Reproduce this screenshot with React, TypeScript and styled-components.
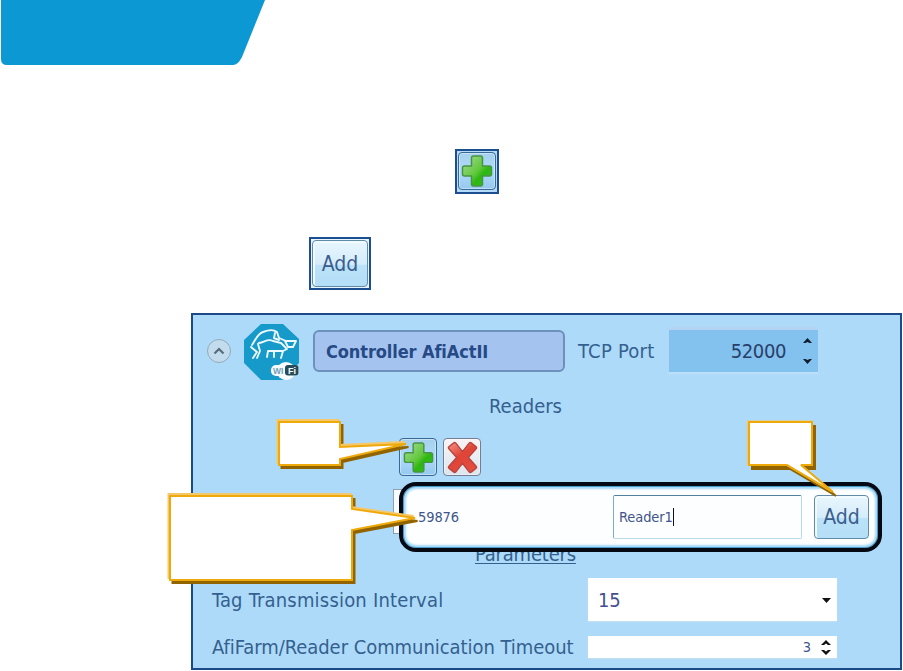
import React, { useState } from 'react'
import styled, { createGlobalStyle } from 'styled-components'


const GlobalStyle = createGlobalStyle`
    body {
        margin: 0;
        background: #fff;
        overflow: hidden;
    }
    * {
        box-sizing: border-box;
    }
`

const Page = styled.div`
    position: relative;
    width: 903px;
    height: 671px;
    overflow: hidden;
    font-family: 'DejaVu Sans Condensed', 'DejaVu Sans', sans-serif;
    font-stretch: condensed;
    color: #34608f;
`

const Banner = styled.svg`
    display: block;
    width: 280px;
    height: 66px;
`

const AddReaderFrame = styled.div`
    width: 44px;
    height: 45px;
    margin: 83px 0 0 455px;
    padding: 1px;
    border: 2px solid #1d4e8f;
    background: #b4dcf8;
`

const AddFrame = styled.div`
    width: 62px;
    height: 53px;
    margin: 43px 0 0 309px;
    padding: 1px;
    border: 2px solid #1d4e8f;
    background: #e9f5fc;
`

const Panel = styled.div`
    width: 711px;
    height: 357px;
    margin: 23px 0 0 191px;
    border: 2px solid #1c4a88;
    background: #aedaf9;
`

const HeaderRow = styled.div`
    display: flex;
    align-items: center;
    height: 72px;
    padding-left: 14px;
`

const CollapseButton = styled.button`
    display: flex;
    align-items: center;
    justify-content: center;
    width: 24px;
    height: 24px;
    padding: 0;
    border: 1.5px solid #93a9b8;
    border-radius: 50%;
    background: #c2dcee;
`

const Logo = styled.svg`
    width: 58px;
    height: 58px;
    margin: 1px 0 0 12px;
`

const NameField = styled.div`
    width: 252px;
    height: 42px;
    margin-left: 12px;
    padding-left: 11px;
    border: 2px solid #6c91bb;
    border-radius: 6px;
    background: #a5c3ef;
    color: #254a86;
    font-size: 18px;
    font-weight: bold;
    line-height: 39px;
    letter-spacing: -0.1px;
    white-space: nowrap;
`

const Text = styled.span<{ $spacing?: number }>`
    font-size: 20px;
    line-height: 24px;
    letter-spacing: ${({ $spacing }) => $spacing || 0}px;
    white-space: nowrap;
`

const PortLabel = styled(Text)`
    width: 91px;
    margin-left: 13px;
`

const PortField = styled.div`
    display: flex;
    align-items: center;
    justify-content: flex-end;
    gap: 16px;
    width: 149px;
    height: 42px;
    padding-right: 5px;
    background: #83c1ee;
    box-shadow: 0 -3px 2px #b5d2f3, 0 2px 1px #bce0f9;
    color: #293f69;
`

const Spinner = styled.svg`
    display: block;
    flex: none;
`

const ReadersTitle = styled.div`
    height: 51px;
    padding: 7px 0 0 296px;
`

const ButtonRow = styled.div`
    display: flex;
    gap: 6px;
    height: 44px;
    padding-left: 206px;
`

const IconButton = styled.button<{ $danger?: boolean }>`
    display: flex;
    align-items: center;
    justify-content: center;
    width: 38px;
    height: 38px;
    padding: 0;
    border: 1.5px solid ${({ $danger }) => $danger ? '#777c94' : '#376995'};
    border-radius: 4px;
    background: ${({ $danger }) => $danger
        ? 'linear-gradient(#f9f4f4, #dce5ed)'
        : 'linear-gradient(#a5d1ee, #afdafa 50%, #95c9ef)'};
    box-shadow: inset 0 0 0 1px rgba(255, 255, 255, 0.4);
`

const ReaderSection = styled.div`
    position: relative;
    height: 96px;
    padding-left: 206px;
`

// Left edge of the grid row, visible beside the highlighted frame
const GridRowEdge = styled.div`
    position: absolute;
    left: 200px;
    top: 7px;
    width: 12px;
    height: 45px;
    border: 1px solid #8f9fae;
    background: #f8fbfd;
`

const ReaderRow = styled.div`
    position: relative;
    z-index: 1;
    display: flex;
    align-items: center;
    width: 483px;
    height: 70px;
    padding-left: 15px;
    border: 4px solid #040914;
    border-radius: 17px;
    background: #fdfeff;
    box-shadow: inset 0 0 0 1px #4c9bcb, inset 0 0 2px 3px #a4daf7;
`

const SmallText = styled.span`
    color: #40558c;
    font-size: 14.5px;
    letter-spacing: -0.1px;
    white-space: nowrap;
`

const ReaderId = styled(SmallText)`
    width: 195px;
`

const ReaderInput = styled.div`
    display: flex;
    align-items: center;
    width: 189px;
    height: 44px;
    padding-left: 5px;
    border: 1px solid #b9dae8;
    border-top-color: #53809e;
    border-left-color: #7cacc7;
    border-radius: 2px;
`

const Caret = styled.span`
    width: 1px;
    height: 18px;
    background: #111;
`

const AddButton = styled.button<{ $width: number, $height: number }>`
    width: ${({ $width }) => $width}px;
    height: ${({ $height }) => $height}px;
    padding: 0;
    border: 1.5px solid #608ba9;
    border-radius: 4px;
    background: linear-gradient(#e9f6fd, #d4ecfa 52%, #bbe2f8 53%, #b4def7);
    box-shadow: inset 1px 1px 0 1px #f1faff;
    color: #3b5e8f;
    font-family: inherit;
    font-stretch: condensed;
    font-size: 21px;
    line-height: 24px;
`

const RowAddButton = styled(AddButton)`
    margin-left: 12px;
`

const ParametersTitle = styled.div`
    margin: -10px 0 0 76px;
    text-decoration: underline;
    text-decoration-thickness: 1px;
    text-underline-offset: 2px;
`

const Settings = styled.div`
    display: flex;
    flex-direction: column;
    gap: 15px;
`

const SettingRow = styled.div<{ $height: number }>`
    display: flex;
    align-items: center;
    height: ${({ $height }) => $height}px;
    padding-left: 19px;
`

const SettingLabel = styled(Text)`
    width: 376px;
`

const SettingField = styled.div`
    display: flex;
    align-items: center;
    justify-content: space-between;
    width: 249px;
    height: 100%;
    padding: 0 6px 0 10px;
    background: #fff;
    box-shadow: 0 1px 1px #c1def0;
    color: #454f8f;
`

const NumberField = styled(SettingField)`
    justify-content: flex-end;
    gap: 10px;
`

const CalloutLayer = styled.svg`
    position: absolute;
    left: 0;
    top: 0;
    z-index: 2;
    pointer-events: none;
`


const PlusIcon = ({ size = 33 }: { size?: number }) => (
    <svg width={size} height={size} viewBox="0 0 34 34">
        <defs>
            <linearGradient id="plusFill" x1="0" y1="0" x2="1" y2="1">
                <stop offset="0" stopColor="#a9dc9c" />
                <stop offset="0.5" stopColor="#62c83d" />
                <stop offset="0.65" stopColor="#2eb710" />
                <stop offset="1" stopColor="#37bd22" />
            </linearGradient>
        </defs>
        <path
            d="M13.5 2h7q2 0 2 2v8h7q2 0 2 2v6q0 2-2 2h-7v8q0 2-2 2h-7q-2 0-2-2v-8h-7q-2 0-2-2v-6q0-2 2-2h7v-8q0-2 2-2z"
            fill="url(#plusFill)"
            stroke="#489447"
            strokeWidth="1.5"
        />
    </svg>
)

const CrossIcon = () => (
    <svg width="35" height="35" viewBox="0 0 36 36">
        <defs>
            <linearGradient id="crossFill" x1="0" y1="0" x2="0.6" y2="1">
                <stop offset="0" stopColor="#f49589" />
                <stop offset="0.5" stopColor="#df4436" />
                <stop offset="1" stopColor="#e34c3f" />
            </linearGradient>
        </defs>
        <path
            d="M4 7l5-4q1-1 2 0l7 9 7-9q1-1 2 0l5 4q1 1 0 2l-8 9 8 9q1 1 0 2l-5 4q-1 1-2 0l-7-9-7 9q-1 1-2 0l-5-4q-1-1 0-2l8-9-8-9q-1-1 0-2z"
            fill="url(#crossFill)"
            stroke="#ba4540"
            strokeWidth="1.5"
        />
    </svg>
)

const ControllerLogo = () => (
    <Logo viewBox="0 0 58 58">
        <path d="M18 1h22l16 15v24L40 57H18L1 40V17z" fill="#159aca" />
        <g fill="none" stroke="#edf8ff" strokeWidth="1.9" strokeLinecap="round" strokeLinejoin="round">
            <path d="M9 22C12 18 14 11 20 9C25 7 30 6 34 9L36 15L43 18H53L50 24H45L42 18" />
            <path d="M32 10L31 15L36 17M16 20C22 19 25 15 30 18L38 20L43 25" />
            <path d="M8 24L14 29L10 35M15 21L17 28L14 35M24 34L25 28H40L38 35M31 28V34M40 28L44 26" />
        </g>
        <ellipse cx="43" cy="48" rx="9.5" ry="9" fill="#f8fcff" />
        <rect x="28" y="42" width="28" height="11" rx="5" fill="#f8fcff" />
        <rect x="42" y="42" width="13.5" height="10.5" rx="3" fill="#264c5c" />
        <text x="30" y="51" fontFamily="Liberation Sans, sans-serif" fontSize="8.5" fontWeight="bold" fill="#6fa0b8">WI</text>
        <text x="45" y="51" fontFamily="Liberation Sans, sans-serif" fontSize="9" fontWeight="bold" fill="#fff">Fi</text>
    </Logo>
)

const PortSpinner = () => (
    <Spinner width="11" height="30" viewBox="0 0 11 30">
        <path d="M1 7l4.5-5L10 7H7.5l-2-1-2 1zM1 23l4.5 5 4.5-5H7.5l-2 1-2-1z" fill="#111c2d" />
    </Spinner>
)

const Callout = ({ shape, highlight, shadow = '2.5 3' }: { shape: string, highlight: string, shadow?: string }) => (
    <g strokeLinejoin="miter" strokeWidth="2" strokeMiterlimit="2">
        <path d={shape} transform={`translate(${shadow})`} fill="#926400" stroke="#926400" />
        <path d={shape} transform={`translate(${highlight})`} fill="#f5c76b" stroke="#f5c76b" />
        <path d={shape} fill="#fff" stroke="#edaa0a" />
    </g>
)

const App = () => {
    const [readerName] = useState('Reader1')

    return (
        <Page>
            <GlobalStyle />
            <Banner viewBox="0 0 280 66">
                <path d="M1 0H265L242 57Q238 65 233 65H7Q1 65 1 59Z" fill="#0c99d3" />
            </Banner>
            <AddReaderFrame>
                <IconButton><PlusIcon size={34} /></IconButton>
            </AddReaderFrame>
            <AddFrame>
                <AddButton $width={56} $height={47}>Add</AddButton>
            </AddFrame>
            <Panel>
                <HeaderRow>
                    <CollapseButton>
                        <svg width="12" height="10" viewBox="0 0 12 10">
                            <path d="M1.5 7.5L6 3l4.5 4.5" fill="none" stroke="#596c7b" strokeWidth="2.2" />
                        </svg>
                    </CollapseButton>
                    <ControllerLogo />
                    <NameField>Controller AfiActII</NameField>
                    <PortLabel $spacing={0.25}>TCP Port</PortLabel>
                    <PortField>
                        <Text $spacing={-0.4}>52000</Text>
                        <PortSpinner />
                    </PortField>
                </HeaderRow>
                <ReadersTitle><Text>Readers</Text></ReadersTitle>
                <ButtonRow>
                    <IconButton><PlusIcon /></IconButton>
                    <IconButton $danger><CrossIcon /></IconButton>
                </ButtonRow>
                <ReaderSection>
                    <GridRowEdge />
                    <ReaderRow>
                        <ReaderId>59876</ReaderId>
                        <ReaderInput>
                            <SmallText>{readerName}</SmallText>
                            <Caret />
                        </ReaderInput>
                        <RowAddButton $width={55} $height={44}>Add</RowAddButton>
                    </ReaderRow>
                    <ParametersTitle><Text $spacing={-0.2}>Parameters</Text></ParametersTitle>
                </ReaderSection>
                <Settings>
                    <SettingRow $height={43}>
                        <SettingLabel $spacing={0.2}>Tag Transmission Interval</SettingLabel>
                        <SettingField>
                            <Text $spacing={-0.3}>15</Text>
                            <svg width="9" height="6" viewBox="0 0 9 6"><path d="M0 1h9L4.5 6z" fill="#111" /></svg>
                        </SettingField>
                    </SettingRow>
                    <SettingRow $height={22}>
                        <SettingLabel $spacing={-0.05}>AfiFarm/Reader Communication Timeout</SettingLabel>
                        <NumberField>
                            <SmallText>3</SmallText>
                            <Spinner width="10" height="17" viewBox="0 0 10 17">
                                <path d="M0 6l5-5 5 5H7L5 4.5 3 6zM0 11l5 5 5-5H7l-2 1.5-2-1.5z" fill="#111" />
                            </Spinner>
                        </NumberField>
                    </SettingRow>
                </Settings>
            </Panel>
            <CalloutLayer width="903" height="671" viewBox="0 0 903 671">
                <Callout shape="M279 422H340V447L406 444L340 459V465H279Z" highlight="-1.5 -2" />
                <Callout shape="M170 496H352V509L415 518L352 530V580H170Z" highlight="-1.5 -2" />
                <Callout shape="M749 422H812V465H801L833 492L787 465H749Z" highlight="-1 -0.5" shadow="3 4" />
            </CalloutLayer>
        </Page>
    )
}

export default App
